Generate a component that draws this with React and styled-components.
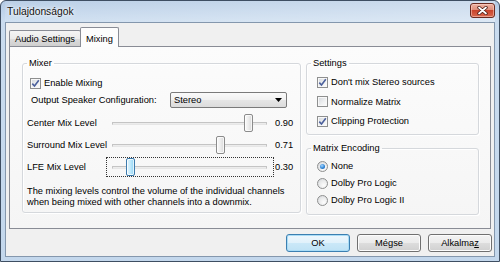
import React from 'react';
import styled, { createGlobalStyle } from 'styled-components';

const GlobalStyle = createGlobalStyle`
  html, body {
    margin: 0;
    padding: 0;
    width: 500px;
    height: 262px;
    overflow: hidden;
    background: #fff;
  }
  body {
    font-family: "Liberation Sans", Arial, sans-serif;
    font-size: 9.3px;
    color: #000;
    white-space: nowrap;
  }
  * { box-sizing: border-box; }
`;

const sliders = [
  { label: 'Center Mix Level', value: 0.9, max: 1 },
  { label: 'Surround Mix Level', value: 0.71, max: 1 },
  { label: 'LFE Mix Level', value: 0.3, max: 3, focus: true },
];

const Window = styled.div`
  width: 500px;
  height: 262px;
  border: 1px solid #3e4e62;
  border-radius: 6px 6px 0 0;
  background: linear-gradient(to bottom, #b3cae4 0px, #cadcef 20px, #c3d7ec 100%);
  padding: 0 4px 4px;
  display: flex;
  flex-direction: column;
`;

const TitleBar = styled.div`
  height: 21px;
  display: flex;
  justify-content: space-between;
  padding: 0 0 0 2px;
  background: linear-gradient(to right, rgba(255,255,255,0.1), rgba(255,255,255,0.35));
`;

const Title = styled.div`
  align-self: center;
  font-size: 10.3px;
  color: #111;
  text-shadow: 0 0 5px rgba(255, 255, 255, 0.95), 0 0 2px #fff;
`;

const CloseButton = styled.div`
  width: 25px;
  height: 15px;
  margin-top: 2px;
  border: 1px solid #6a2a20;
  border-radius: 3px;
  background: linear-gradient(to bottom, #eeb2a2 0%, #df8f7b 45%, #c9442c 50%, #d9684e 100%);
  box-shadow: inset 0 0 0 1px rgba(255, 220, 210, 0.5);
  display: flex;
  align-items: center;
  justify-content: center;
`;

const Client = styled.div`
  flex: 1;
  background: #f0f0f0;
  border: 1px solid #8497ad;
  display: flex;
  flex-direction: column;
`;

const TabStrip = styled.div`
  height: 23px;
  flex-shrink: 0;
  display: flex;
  align-items: flex-end;
  padding-left: 3px;
`;

const Tab = styled.div`
  position: relative;
  height: ${(p) => (p.$active ? '20px' : '16px')};
  margin-bottom: ${(p) => (p.$active ? '-1px' : '0')};
  margin-left: ${(p) => (p.$active ? '-1px' : '0')};
  z-index: ${(p) => (p.$active ? 1 : 0)};
  padding: ${(p) => (p.$active ? '2px 5px 0' : '1px 5px 0')};
  border: 1px solid #898c95;
  border-bottom: none;
  border-radius: 2px 2px 0 0;
  background: ${(p) =>
    p.$active ? '#fdfdfd' : 'linear-gradient(to bottom, #f4f4f4 0%, #ebebeb 50%, #dddddd 51%, #cfcfcf 100%)'};
  display: flex;
  align-items: center;
  line-height: 12px;
`;

const Panel = styled.div`
  height: 183px;
  flex-shrink: 0;
  margin: 0 3px;
  border: 1px solid #898c95;
  background: linear-gradient(to bottom, #fcfcfc, #f5f5f5);
  display: flex;
  align-items: flex-start;
  gap: 5px;
  padding: 10px 0 0 12px;
`;

const Group = styled.fieldset`
  margin: 0;
  padding: 0;
  min-width: 0;
  flex-shrink: 0;
  width: ${(p) => p.$w}px;
  height: ${(p) => p.$h}px;
  border: 1px solid #d5d8dc;
  border-radius: 3px;
  box-shadow: inset 1px 1px 0 #fff, 1px 1px 0 #fff;
  display: flex;
  flex-direction: column;
  gap: ${(p) => p.$gap || 0}px;
`;

const Legend = styled.legend`
  padding: 0 2px;
  margin-left: 4px;
  line-height: 12px;
`;

const Column = styled.div`
  display: flex;
  flex-direction: column;
  gap: 7px;
`;

const OptionRow = styled.label`
  height: 14px;
  flex-shrink: 0;
  display: flex;
  align-items: center;
  gap: 3px;
  padding-left: ${(p) => p.$indent}px;
  margin-top: ${(p) => p.$top || 0}px;
`;

const Box = styled.span`
  width: 11px;
  height: 11px;
  border: 1px solid #8e8f8f;
  background: linear-gradient(135deg, #d3d7dc 0%, #f0f1f2 60%, #fdfdfd 100%);
  box-shadow: inset 0 0 0 1px #f8f8f8;
  display: flex;
  align-items: center;
  justify-content: center;
  flex-shrink: 0;
`;

const Round = styled.span`
  width: 11px;
  height: 11px;
  border-radius: 50%;
  border: 1px solid #8e8f8f;
  background: radial-gradient(circle at 65% 70%, #fdfdfd 0%, #e8e9ea 55%, #cfd2d6 100%);
  display: flex;
  align-items: center;
  justify-content: center;
  flex-shrink: 0;
`;

const Dot = styled.span`
  width: 5px;
  height: 5px;
  border-radius: 50%;
  background: radial-gradient(circle at 40% 35%, #a9d6ff 0%, #2f86d6 55%, #1a4f9a 100%);
`;

const Checkbox = ({ checked }) => (
  <Box>
    {checked && (
      <svg width="9" height="9" viewBox="0 0 9 9">
        <path d="M1.3 4.6 L3.5 7 L7.8 1.2" fill="none" stroke="#4b609c" strokeWidth="1.6" />
      </svg>
    )}
  </Box>
);

const Radio = ({ checked }) => <Round>{checked && <Dot />}</Round>;

const SpeakerRow = styled.div`
  height: 16px;
  margin-top: 2px;
  padding-left: 8px;
  display: flex;
  align-items: center;
`;

const SpeakerLabel = styled.span`
  width: 139px;
`;

const Combo = styled.div`
  width: 117px;
  height: 16px;
  border: 1px solid #7a7a7a;
  border-radius: 2px;
  background: linear-gradient(to bottom, #fafafa 0%, #f0f0f0 50%, #e6e6e6 51%, #dcdcdc 100%);
  display: flex;
  align-items: center;
  justify-content: space-between;
  padding: 0 4px 0 3px;
`;

const Sliders = styled.div`
  margin-top: 5px;
  display: flex;
  flex-direction: column;
  gap: 2px;
`;

const SliderRow = styled.div`
  height: 20px;
  display: flex;
  align-items: center;
  padding-left: 4px;
`;

const SliderLabel = styled.span`
  width: 79px;
`;

const SliderBox = styled.div`
  position: relative;
  width: 168px;
  height: 20px;
  border: 1px dotted ${(p) => (p.$focus ? '#333' : 'transparent')};
`;

const Track = styled.div`
  position: absolute;
  left: 5px;
  top: 8px;
  width: 155px;
  height: 3px;
  border: 1px solid #c4c4c4;
  border-bottom-color: #e6e6e6;
  background: #ececec;
`;

const Thumb = styled.div`
  position: absolute;
  top: 0;
  width: 9px;
  height: 18px;
  border-radius: 2px;
  border: 1px solid ${(p) => (p.$hot ? '#3d7bad' : '#8b8b8b')};
  background: ${(p) =>
    p.$hot
      ? 'linear-gradient(to right, #e5f6fe 0%, #bfe8fb 50%, #8fd5f4 100%)'
      : 'linear-gradient(to right, #fbfbfb 0%, #ececec 50%, #d9d9d9 100%)'};
  box-shadow: inset 0 0 0 1px rgba(255, 255, 255, 0.7);
`;

const Value = styled.span`
  margin-left: 1px;
`;

const Description = styled.p`
  margin: 9px 0 0;
  padding-left: 4px;
  line-height: 11px;
`;

const ButtonRow = styled.div`
  display: flex;
  justify-content: flex-end;
  gap: 7px;
  margin-top: 5px;
  padding-right: 2px;
`;

const Button = styled.div`
  width: 64px;
  height: 18px;
  border-radius: 3px;
  border: 1px solid ${(p) => (p.$default ? '#3c7fb1' : '#707070')};
  background: ${(p) =>
    p.$default
      ? 'linear-gradient(to bottom, #eef7fd 0%, #e0f1fb 50%, #cbe8f8 51%, #bfe2f5 100%)'
      : 'linear-gradient(to bottom, #f3f3f3 0%, #ebebeb 50%, #dddddd 51%, #d0d0d0 100%)'};
  box-shadow: inset 0 0 0 1px ${(p) => (p.$default ? '#a9dcf6' : '#fcfcfc')};
  display: flex;
  align-items: center;
  justify-content: center;
`;

export default function App() {
  return (
    <>
      <GlobalStyle />
      <Window>
        <TitleBar>
          <Title>Tulajdonságok</Title>
          <CloseButton>
            <svg width="11" height="9" viewBox="0 0 11 9">
              <path d="M2 1.5 L9 7.5 M9 1.5 L2 7.5" stroke="#4a1a12" strokeWidth="3.4" strokeLinecap="round" />
              <path d="M2 1.5 L9 7.5 M9 1.5 L2 7.5" stroke="#fff" strokeWidth="1.8" strokeLinecap="round" />
            </svg>
          </CloseButton>
        </TitleBar>
        <Client>
          <TabStrip>
            <Tab>Audio Settings</Tab>
            <Tab $active>Mixing</Tab>
          </TabStrip>
          <Panel>
            <Group $w={279} $h={156}>
              <Legend>Mixer</Legend>
              <OptionRow $indent={7} $top={7}>
                <Checkbox checked />
                Enable Mixing
              </OptionRow>
              <SpeakerRow>
                <SpeakerLabel>Output Speaker Configuration:</SpeakerLabel>
                <Combo>
                  <span>Stereo</span>
                  <svg width="7" height="4" viewBox="0 0 7 4">
                    <path d="M0 0 H7 L3.5 4 Z" fill="#000" />
                  </svg>
                </Combo>
              </SpeakerRow>
              <Sliders>
                {sliders.map((s) => (
                  <SliderRow key={s.label}>
                    <SliderLabel>{s.label}</SliderLabel>
                    <SliderBox $focus={s.focus}>
                      <Track />
                      <Thumb $hot={s.focus} style={{ left: 4.5 + (s.value / s.max) * 147 }} />
                    </SliderBox>
                    <Value>{s.value.toFixed(2)}</Value>
                  </SliderRow>
                ))}
              </Sliders>
              <Description>
                The mixing levels control the volume of the individual channels
                <br />
                when being mixed with other channels into a downmix.
              </Description>
            </Group>
            <Column>
              <Group $w={173} $h={78} $gap={5.5}>
                <Legend>Settings</Legend>
                <OptionRow $indent={10} $top={6}>
                  <Checkbox checked />
                  Don't mix Stereo sources
                </OptionRow>
                <OptionRow $indent={10}>
                  <Checkbox />
                  Normalize Matrix
                </OptionRow>
                <OptionRow $indent={10}>
                  <Checkbox checked />
                  Clipping Protection
                </OptionRow>
              </Group>
              <Group $w={173} $h={73} $gap={3}>
                <Legend>Matrix Encoding</Legend>
                <OptionRow $indent={10} $top={5}>
                  <Radio checked />
                  None
                </OptionRow>
                <OptionRow $indent={10}>
                  <Radio />
                  Dolby Pro Logic
                </OptionRow>
                <OptionRow $indent={10}>
                  <Radio />
                  Dolby Pro Logic II
                </OptionRow>
              </Group>
            </Column>
          </Panel>
          <ButtonRow>
            <Button $default>OK</Button>
            <Button>Mégse</Button>
            <Button>
              <span>
                Alkalma<u>z</u>
              </span>
            </Button>
          </ButtonRow>
        </Client>
      </Window>
    </>
  );
}
